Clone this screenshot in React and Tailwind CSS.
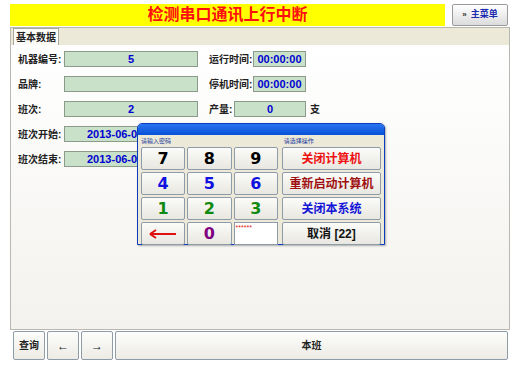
import React from 'react'

const font = { fontFamily: '"Liberation Sans", "Noto Sans CJK SC", sans-serif' }
const numFont = { fontFamily: '"DejaVu Sans", "Noto Sans CJK SC", sans-serif' }

function Field({ value, className }) {
  return (
    <div
      className={`h-[16px] border border-[#8c9a8c] bg-[#c9e1c9] flex items-center overflow-hidden whitespace-nowrap text-[11px] font-bold text-[#0000d0] ${className}`}
    >
      {value}
    </div>
  )
}

function Row({ label, value, wide, right }) {
  return (
    <div className="flex items-center h-[16px]">
      <div className="w-[46px] text-[10px] font-bold text-[#222]">{label}</div>
      <Field value={value} className={`w-[134px] ${wide ? 'pl-[22px]' : 'justify-center'}`} />
      {right}
    </div>
  )
}

const keys = [
  { k: '7', c: 'text-black' },
  { k: '8', c: 'text-black' },
  { k: '9', c: 'text-black' },
  { k: '4', c: 'text-[#1010e0]' },
  { k: '5', c: 'text-[#1010e0]' },
  { k: '6', c: 'text-[#1010e0]' },
  { k: '1', c: 'text-[#108a10]' },
  { k: '2', c: 'text-[#108a10]' },
  { k: '3', c: 'text-[#108a10]' },
]

const actions = [
  { t: '关闭计算机', c: 'text-[#ee1111]' },
  { t: '重新启动计算机', c: 'text-[#a01010]' },
  { t: '关闭本系统', c: 'text-[#1515d8]' },
  { t: '取消 [22]', c: 'text-[#111]' },
]

const keyCls =
  'h-[23px] rounded-[2px] border border-[#8e9caa] bg-gradient-to-b from-[#fbfbf9] to-[#e8e7e0] flex items-center justify-center'

function Dialog() {
  return (
    <div className="absolute left-[137px] top-[123px] w-[248px] h-[122px] rounded-t-[5px] border border-[#0b3bbf] bg-[#ece9d8] shadow-[1px_1px_2px_rgba(0,0,0,0.3)]">
      <div className="h-[11px] rounded-t-[4px] bg-gradient-to-b from-[#2a73f0] to-[#0650d8]" />
      <div className="flex px-[3px] gap-[4px]">
        <div className="w-[138px]">
          <div className="h-[12px] text-[6px] leading-[12px] text-[#1a3aa0]">请输入密码</div>
          <div className="grid grid-cols-3 gap-[2px]">
            {keys.map((x) => (
              <div key={x.k} className={`${keyCls} ${x.c} text-[16px] font-bold`} style={numFont}>
                {x.k}
              </div>
            ))}
            <div className={`${keyCls}`}>
              <svg width="30" height="10" viewBox="0 0 30 10">
                <path d="M2 5 H28" stroke="#e01010" strokeWidth="2" />
                <path d="M2 5 L8 1 M2 5 L8 9" stroke="#e01010" strokeWidth="2" fill="none" />
              </svg>
            </div>
            <div className={`${keyCls} text-[#800080] text-[16px] font-bold`} style={numFont}>0</div>
            <div className="h-[23px] border border-[#8e9caa] bg-white text-[7px] leading-[9px] text-[#e02020] pl-[1px]">******</div>
          </div>
        </div>
        <div className="w-[100px]">
          <div className="h-[12px] text-[6px] leading-[12px] text-[#1a3aa0] pl-[2px]">请选择操作</div>
          <div className="flex flex-col gap-[2px]">
            {actions.map((a) => (
              <div key={a.t} className={`${keyCls} ${a.c} text-[12px] font-bold`}>
                {a.t}
              </div>
            ))}
          </div>
        </div>
      </div>
    </div>
  )
}

function BottomBtn({ children, className }) {
  return (
    <div className={`h-[29px] border border-[#8e9caa] rounded-[2px] bg-gradient-to-b from-[#fdfdfb] to-[#ecebe5] flex items-center justify-center text-[10px] font-bold text-[#222] ${className}`}>
      {children}
    </div>
  )
}

export default function App() {
  return (
    <div className="relative w-[520px] h-[371px] bg-white" style={font}>
      <div className="flex pt-[4px] pl-[10px] pr-[12px] gap-[7px]">
        <div className="flex-1 h-[22px] bg-[#ffff00] flex items-center justify-center text-[16px] font-bold text-[#ff1010]">
          检测串口通讯上行中断
        </div>
        <div className="w-[56px] h-[22px] border border-[#9a9a9a] rounded-[2px] bg-gradient-to-b from-white to-[#dcdcdc] flex items-center justify-center gap-[4px] text-[9px] font-bold text-[#1a2ab0]">
          <span className="text-[8px] text-[#333]">»</span>
          <span>主菜单</span>
        </div>
      </div>

      <div className="mx-[10px] mt-[1px] h-[303px] border border-[#b8b8b0] bg-[#f6f5f1] flex flex-col">
        <div className="h-[17px] bg-[#ece9d8] flex items-end pl-[2px]">
          <div className="h-[17px] w-[46px] border border-b-0 border-[#a8a89c] bg-[#fbfbf8] text-[10px] font-bold text-[#222] flex items-center justify-center">
            基本数据
          </div>
        </div>
        <div className="flex-1 bg-gradient-to-b from-white to-[#f3f2ee] pt-[6px] pl-[7px] flex flex-col gap-[9px]">
          <Row
            label="机器编号:"
            value="5"
            right={
              <>
                <div className="ml-[11px] w-[44px] text-[10px] font-bold text-[#222]">运行时间:</div>
                <Field value="00:00:00" className="w-[53px] justify-center" />
              </>
            }
          />
          <Row
            label="品牌:"
            value=""
            right={
              <>
                <div className="ml-[11px] w-[44px] text-[10px] font-bold text-[#222]">停机时间:</div>
                <Field value="00:00:00" className="w-[53px] justify-center" />
              </>
            }
          />
          <Row
            label="班次:"
            value="2"
            right={
              <>
                <div className="ml-[11px] w-[25px] text-[10px] font-bold text-[#222]">产量:</div>
                <Field value="0" className="w-[72px] justify-center" />
                <div className="ml-[4px] text-[10px] font-bold text-[#222]">支</div>
              </>
            }
          />
          <Row label="班次开始:" value="2013-06-01 08:00" wide />
          <Row label="班次结束:" value="2013-06-01 20:00" wide />
        </div>
      </div>

      <div className="mx-[10px] mt-[1px] flex gap-[2px] pl-[3px] pr-[2px]">
        <BottomBtn className="w-[32px]">查询</BottomBtn>
        <BottomBtn className="w-[32px] font-normal text-[12px]">←</BottomBtn>
        <BottomBtn className="w-[32px] font-normal text-[12px]">→</BottomBtn>
        <BottomBtn className="flex-1">本班</BottomBtn>
      </div>

      <Dialog />
    </div>
  )
}
